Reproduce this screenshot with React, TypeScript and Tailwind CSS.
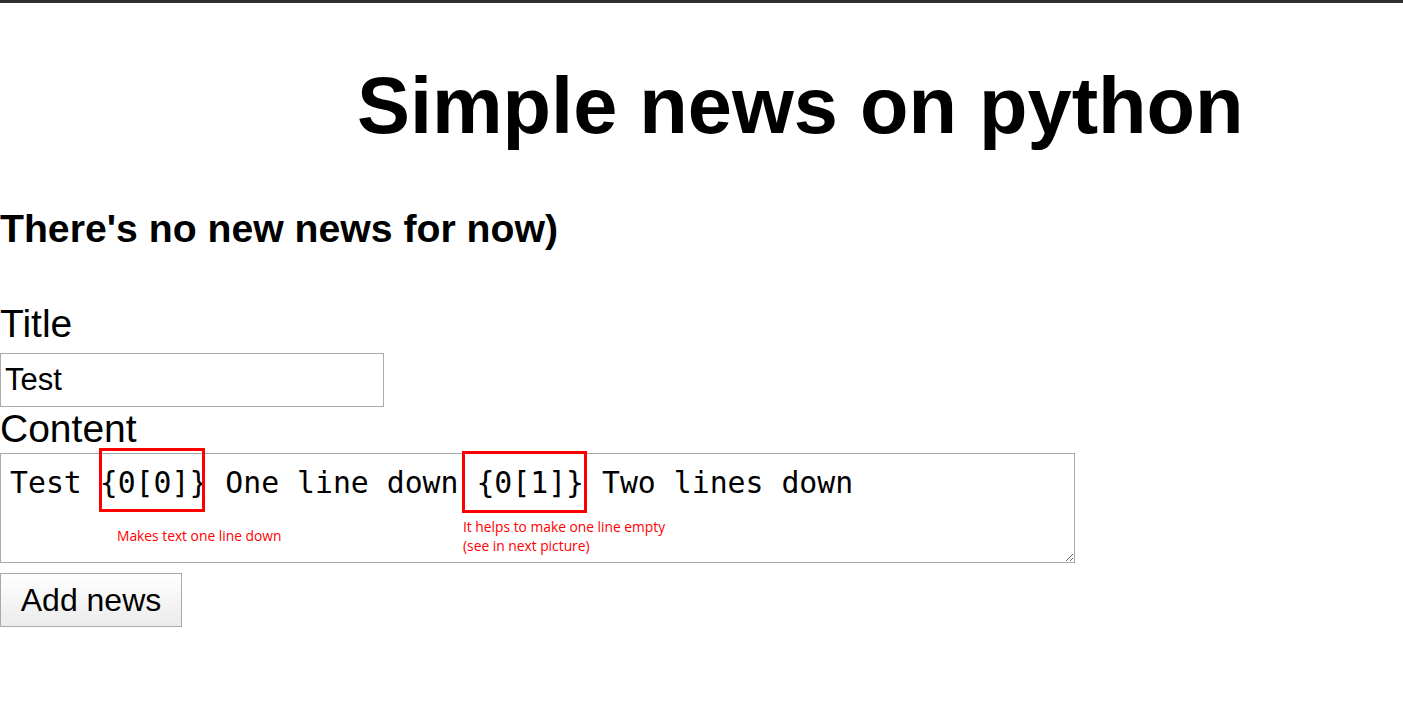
export default function App() {
  return (
    <div className="flex min-h-screen flex-col bg-white text-black font-['Liberation_Sans',Arial,sans-serif]">
      <div className="h-[3px] bg-[#2f2f2f]" />

      <h1 className="mt-[63px] pl-[357px] text-[79.4px] font-bold leading-none">Simple news on python</h1>

      <h2 className="mt-[64px] text-[39.2px] font-bold leading-none">There's no new news for now)</h2>

      <form className="mt-[55px] flex flex-col items-start" onSubmit={e => e.preventDefault()}>
        <label className="text-[39px] leading-none">Title</label>
        <input
          className="mt-[10px] h-[54px] w-[384px] border border-[#a9a9a9] px-[4px] text-[31px] outline-none"
          defaultValue="Test"
        />

        <label className="mt-[2px] text-[39px] leading-none">Content</label>
        <div className="relative mt-[5px] w-[1075px]">
          <textarea
            className="block h-[110px] w-[1075px] border border-[#a9a9a9] pl-[9px] pt-[11px] font-['DejaVu_Sans_Mono',monospace] text-[29.8px] leading-[36px] outline-none"
            defaultValue="Test {0[0]} One line down {0[1]} Two lines down"
          />

          {/* annotations drawn over the textarea */}
          <div className="pointer-events-none absolute left-[99px] top-[-5px] h-[64px] w-[106px] border-[3px] border-[#ff0000]" />
          <div className="pointer-events-none absolute left-[462px] top-[-2px] h-[62px] w-[125px] border-[3px] border-[#ff0000]" />
          <div className="pointer-events-none absolute left-[117px] top-[73px] font-['Open_Sans',sans-serif] text-[13.8px] leading-[19px] text-[#ff0000]">
            Makes text one line down
          </div>
          <div className="pointer-events-none absolute left-[463px] top-[64px] font-['Open_Sans',sans-serif] text-[13.8px] leading-[19px] text-[#ff0000]">
            It helps to make one line empty
            <br />
            (see in next picture)
          </div>
        </div>

        <button
          type="submit"
          className="mt-[10px] h-[54px] w-[182px] border border-[#a9a9a9] bg-gradient-to-b from-white to-[#ebebeb] text-[32px] leading-none"
        >
          Add news
        </button>
      </form>
    </div>
  );
}
